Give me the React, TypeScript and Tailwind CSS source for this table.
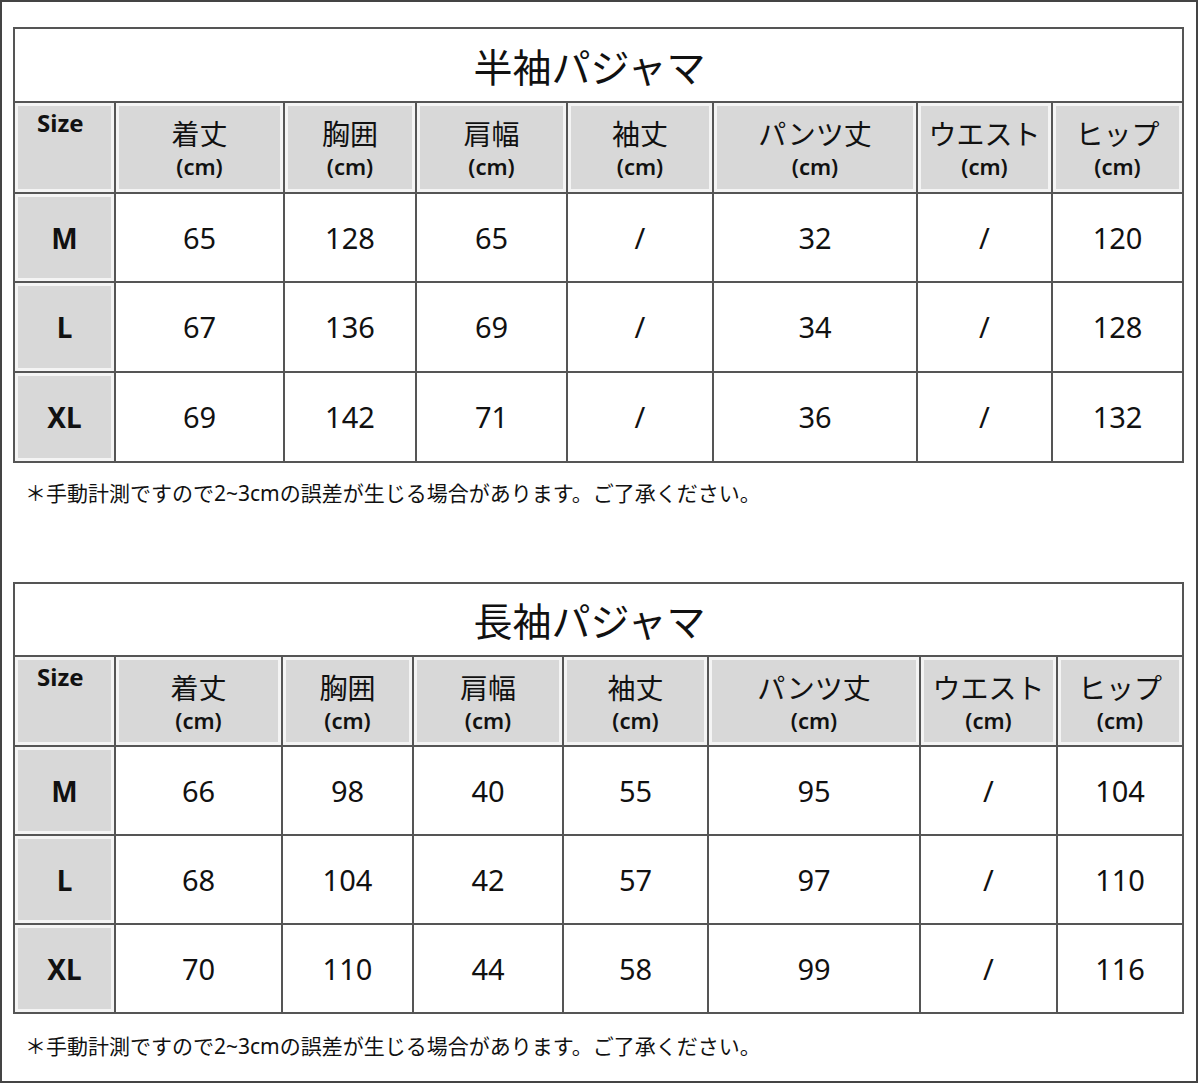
const font = { fontFamily: '"Noto Sans", "Noto Sans CJK JP", sans-serif' };

type TableData = {
  title: string;
  widths: number[];
  heights: number[];
  rows: { size: string; values: string[] }[];
};

const headers = ["着丈", "胸囲", "肩幅", "袖丈", "パンツ丈", "ウエスト", "ヒップ"];

const tables: TableData[] = [
  {
    title: "半袖パジャマ",
    widths: [101, 169, 132, 151, 146, 204, 135, 131],
    heights: [74, 91, 89, 90, 90],
    rows: [
      { size: "M", values: ["65", "128", "65", "/", "32", "/", "120"] },
      { size: "L", values: ["67", "136", "69", "/", "34", "/", "128"] },
      { size: "XL", values: ["69", "142", "71", "/", "36", "/", "132"] },
    ],
  },
  {
    title: "長袖パジャマ",
    widths: [101, 167, 131, 150, 145, 212, 137, 126],
    heights: [73, 90, 89, 89, 89],
    rows: [
      { size: "M", values: ["66", "98", "40", "55", "95", "/", "104"] },
      { size: "L", values: ["68", "104", "42", "57", "97", "/", "110"] },
      { size: "XL", values: ["70", "110", "44", "58", "99", "/", "116"] },
    ],
  },
];

const SizeTable = ({ data }: { data: TableData }) => {
  return (
    <table className="table-fixed border-collapse w-[1169px] text-[#111]">
      <colgroup>
        {data.widths.map((w, i) => (
          <col key={i} style={{ width: w }} />
        ))}
      </colgroup>
      <tbody>
        <tr style={{ height: data.heights[0] }}>
          <td colSpan={8} className="border-2 border-[#555] text-center text-[39px] leading-none pt-[2px] pr-[18px]">
            {data.title}
          </td>
        </tr>
        <tr style={{ height: data.heights[1] }}>
          <td className="border-2 border-[#555] bg-[#d8d8d8] shadow-[inset_0_0_0_3px_#f4f4f4] align-top pt-[8px] pl-[22px] text-[24px] font-bold leading-none">
            Size
          </td>
          {headers.map((h) => (
            <td
              key={h}
              className="border-2 border-[#555] bg-[#d8d8d8] shadow-[inset_0_0_0_3px_#f4f4f4] text-center"
            >
              <div className="text-[28px] leading-[32px] pt-[5px]">{h}</div>
              <div className="text-[22px] font-semibold leading-[32px]">(cm)</div>
            </td>
          ))}
        </tr>
        {data.rows.map((r, ri) => (
          <tr key={r.size} style={{ height: data.heights[ri + 2] }}>
            <td className="border-2 border-[#555] bg-[#d8d8d8] shadow-[inset_0_0_0_3px_#f4f4f4] text-center text-[28px] font-bold">
              {r.size}
            </td>
            {r.values.map((v, vi) => (
              <td key={vi} className="border-2 border-[#555] text-center text-[29px]">
                {v}
              </td>
            ))}
          </tr>
        ))}
      </tbody>
    </table>
  );
};

const Note = () => (
  <p className="pl-[12px] text-[21px] leading-none text-[#111]">
    ＊手動計測ですので2~3cmの誤差が生じる場合があります。ご了承ください。
  </p>
);

export default function App() {
  return (
    <div className="w-[1200px] h-[1084px] bg-white" style={font}>
      <div className="w-[1198px] h-[1083px] border-2 border-[#444] pl-[11px] pt-[25px]">
        <SizeTable data={tables[0]} />
        <div className="pt-[20px] h-[119px]">
          <Note />
        </div>
        <SizeTable data={tables[1]} />
        <div className="pt-[22px]">
          <Note />
        </div>
      </div>
    </div>
  );
}
